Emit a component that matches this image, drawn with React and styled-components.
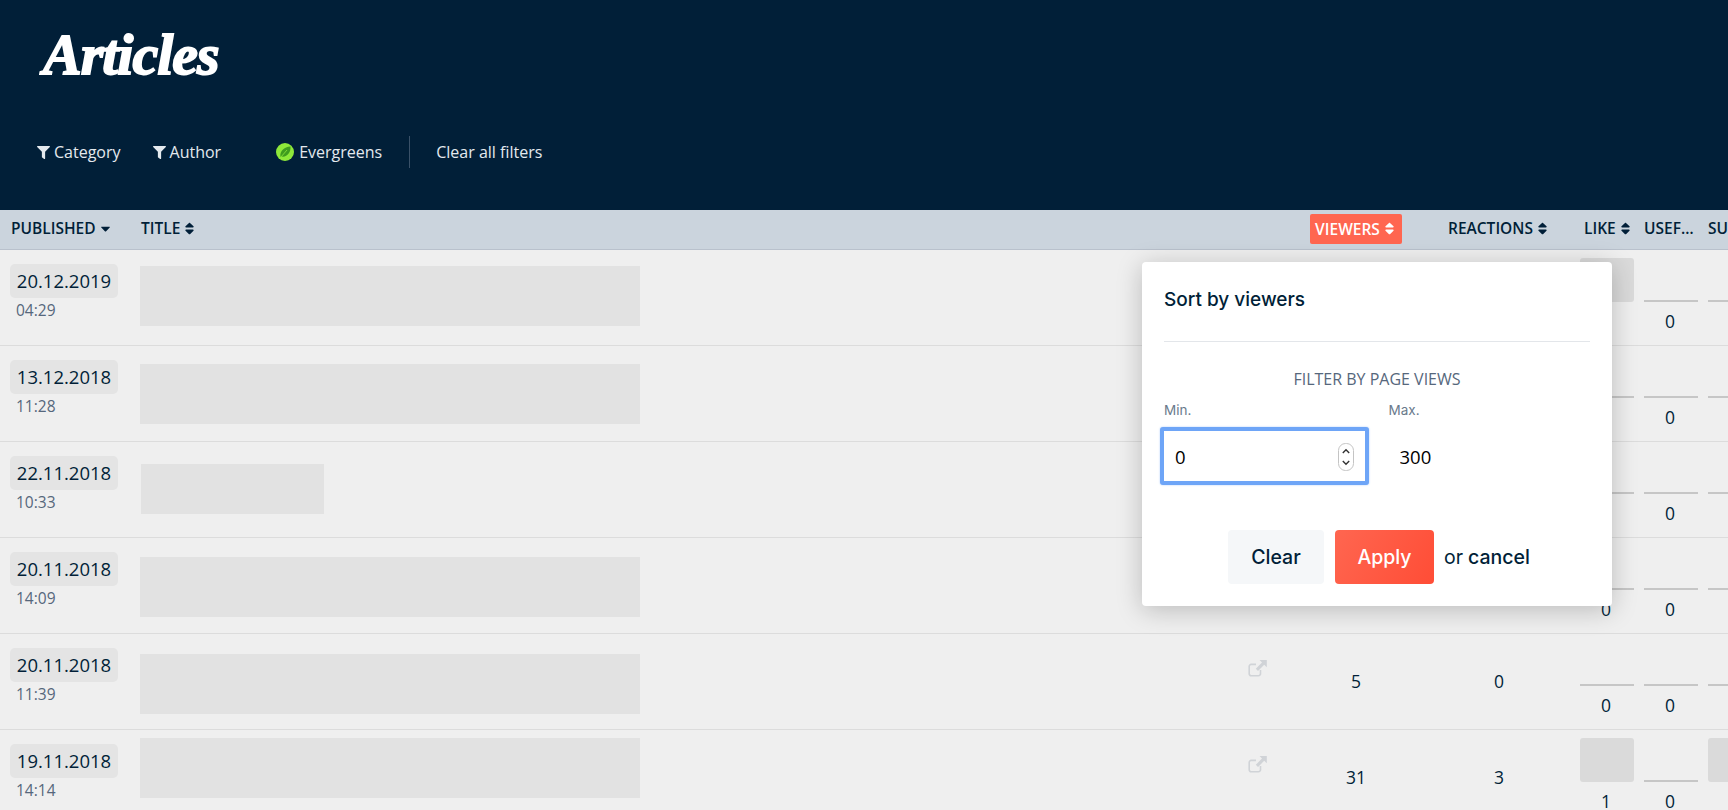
import React from 'react'
import styled, { createGlobalStyle, css } from 'styled-components'
import { FaFilter, FaSort, FaCaretDown } from 'react-icons/fa'

const GlobalStyle = createGlobalStyle`
  html, body {
    margin: 0;
    height: 100%;
    overflow: hidden;
    background: #efefef;
    font-family: 'Open Sans', sans-serif;
    color: #011f38;
  }
  * { box-sizing: border-box; }
`

const Header = styled.header`
  height: 210px;
  background: #011f38;
  padding: 24px 0 0 37px;
`

const Logo = styled.h1`
  margin: 0 0 0 6px;
  height: 62px;
  font-family: 'Liberation Serif', serif;
  font-size: 58px;
  line-height: 62px;
  font-weight: 700;
  font-style: italic;
  letter-spacing: -1px;
  color: #fff;
  -webkit-text-stroke: 1.8px #fff;
`

const FilterBar = styled.nav`
  display: flex;
  align-items: center;
  height: 32px;
  margin-top: 50px;
  font-size: 16px;
  color: #e4e9ee;
`

const FilterItem = styled.span`
  display: flex;
  align-items: center;
  gap: ${p => p.$gap || 4}px;
  margin-right: ${p => p.$right || 0}px;
  svg { color: #e4e9ee; }
`

const BarDivider = styled.span`
  width: 1px;
  height: 32px;
  background: #3a5168;
  margin: 0 26px 0 27px;
`

const Table = styled.main`
  position: relative;
`

const gridColumns = css`
  display: grid;
  grid-template-columns: 140px 1108px 62px 92px 178px 64px 64px 64px;
`

const HeadRow = styled.div`
  ${gridColumns}
  height: 40px;
  padding-bottom: 3px;
  align-items: center;
  background: #cbd4dd;
  border-bottom: 1px solid #b9c1cc;
  font-size: 15.5px;
  font-weight: 600;
  white-space: nowrap;
  overflow: hidden;
`

const HeadCell = styled.div`
  display: flex;
  align-items: center;
  gap: 2px;
  min-width: 0;
  padding-left: ${p => p.$pad || 0}px;
  svg { flex: none; }
`

const ActiveHead = styled.div`
  display: flex;
  align-items: center;
  justify-content: center;
  gap: 2px;
  height: 30px;
  margin-top: 1px;
  background: #ff6650;
  border-radius: 2px;
  color: #fff;
`

const Truncated = styled.span`
  display: block;
  width: 53px;
  overflow: hidden;
  text-overflow: ellipsis;
`

const Row = styled.div`
  ${gridColumns}
  height: 96px;
  background: #efefef;
  border-bottom: 1px solid #dcdcdc;
  overflow: hidden;
`

const DateCell = styled.div`
  padding: 14px 0 0 10px;
`

const DateBadge = styled.div`
  width: 108px;
  height: 34px;
  border-radius: 5px;
  background: #e4e4e4;
  font-size: 18.5px;
  line-height: 34px;
  text-align: center;
`

const Time = styled.div`
  margin: 2px 0 0 6px;
  font-size: 15.5px;
  line-height: 21px;
  color: #56677c;
`

const TitleCell = styled.div`
  padding-top: ${p => p.$top}px;
  padding-left: ${p => p.$left || 0}px;
`

const TitleBlock = styled.div`
  width: ${p => p.$w}px;
  height: ${p => p.$h}px;
  background: #e2e2e2;
`

const LinkCell = styled.div`
  padding-top: 26px;
  color: #d0d3d7;
`

const CountCell = styled.div`
  padding-top: 35px;
  padding-left: ${p => p.$pad || 0}px;
  text-align: center;
  font-size: 17.5px;
  line-height: 24px;
`

const ReactionCell = styled.div`
  padding-top: 8px;
`

const Bar = styled.div`
  width: 54px;
  height: 44px;
  display: flex;
  align-items: flex-end;
`

const BarFill = styled.div`
  width: 100%;
  border-radius: ${p => (p.$tall ? '3px' : '0')};
  height: ${p => (p.$tall ? 44 : 2)}px;
  background: ${p => (p.$tall ? '#dadada' : '#c6c6c6')};
`

const BarValue = styled.div`
  width: 52px;
  margin-top: 7px;
  text-align: center;
  font-size: 17.5px;
  line-height: 24px;
`

const Popover = styled.section`
  position: absolute;
  top: 52px;
  left: 1142px;
  width: 470px;
  height: 344px;
  padding: 0 22px;
  background: #fff;
  border-radius: 4px;
  box-shadow: 0 4px 26px rgba(0, 0, 0, 0.22);
`

const PopTitle = styled.h2`
  margin: 0;
  height: 80px;
  padding-top: 25px;
  border-bottom: 1px solid #e3e6ea;
  font-family: Inter, sans-serif;
  font-size: 19px;
  line-height: 26px;
  font-weight: 500;
`

const FilterLabel = styled.div`
  margin-top: 26px;
  text-align: center;
  font-size: 16px;
  line-height: 22px;
  color: #56677c;
`

const Inputs = styled.div`
  display: grid;
  grid-template-columns: 224.5px 202px;
  margin-top: 11px;
`

const FieldLabel = styled.label`
  display: block;
  font-family: Inter, sans-serif;
  font-size: 13.5px;
  line-height: 18px;
  color: #6a7a8c;
`

const FieldWrap = styled.div`
  position: relative;
  margin-top: ${p => (p.$focused ? 8 : 12)}px;
  margin-left: ${p => (p.$focused ? -4 : 0)}px;
  width: ${p => (p.$focused ? '209px' : '100%')};
`

const NumberField = styled.input`
  display: block;
  width: 100%;
  height: ${p => (p.$focused ? 58 : 50)}px;
  padding: 0 0 0 11px;
  border: ${p => (p.$focused ? '4px solid #6ea5f7' : '0')};
  border-radius: 3px;
  outline: none;
  background: #fff;
  box-shadow: ${p => (p.$focused ? '0 0 2px #a8c8fa' : 'none')};
  font-family: 'Open Sans', sans-serif;
  font-size: 18.5px;
  color: #000;
`

const Spinner = styled.svg`
  position: absolute;
  top: 16px;
  right: 15px;
`

const Actions = styled.div`
  display: flex;
  align-items: center;
  margin: 45px 0 0 64px;
  font-family: Inter, sans-serif;
  font-size: 19.5px;
  font-weight: 500;
`

const Button = styled.button`
  width: ${p => (p.$primary ? 99 : 96)}px;
  height: 54px;
  margin-right: ${p => (p.$primary ? 10 : 11)}px;
  border: 0;
  border-radius: 4px;
  background: ${p => (p.$primary ? 'linear-gradient(120deg, #ff6650, #ff4d36)' : '#f5f7f9')};
  color: ${p => (p.$primary ? '#fff' : '#011f38')};
  font: inherit;
`

const Or = styled.span`
  font-weight: 400;
  margin-right: 5px;
`

const LeafIcon = () => (
  <svg width="18" height="18" viewBox="0 0 18 18">
    <circle cx="9" cy="9" r="9" fill="#8ee83a" />
    <path d="M4.5 14 C3.5 8 8 4 14.5 3.5 C15 9.5 11 14.5 5.5 13.5 Z" fill="#3f9c1e" />
    <path d="M4.5 14.5 L11 7" stroke="#8ee83a" strokeWidth="0.8" fill="none" />
  </svg>
)

const ExternalIcon = () => (
  <svg width="19" height="17" viewBox="0 0 19 17" fill="none">
    <path d="M12.5 10 V13.5 A2 2 0 0 1 10.5 15.7 H3.3 A2 2 0 0 1 1.2 13.5 V6.5 A2 2 0 0 1 3.3 4.4 H8" stroke="currentColor" strokeWidth="1.6" />
    <path d="M11.5 0 H18.8 V7.3 L16.2 4.8 L10 11 L7.8 8.8 L14 2.6 Z" fill="currentColor" />
  </svg>
)

const SpinnerIcon = () => (
  <Spinner width="16" height="28" viewBox="0 0 16 28" fill="none">
    <rect x="0.5" y="0.5" width="15" height="27" rx="7" fill="#fff" stroke="#c4c4c4" />
    <path d="M4.8 10 L8 6.8 L11.2 10 M4.8 18 L8 21.2 L11.2 18" stroke="#333" strokeWidth="1.4" />
  </Spinner>
)

const rows = [
  { date: '20.12.2019', time: '04:29', top: 16, w: 500, h: 60, like: 1 },
  { date: '13.12.2018', time: '11:28', top: 18, w: 500, h: 60 },
  { date: '22.11.2018', time: '10:33', top: 22, left: 1, w: 183, h: 50 },
  { date: '20.11.2018', time: '14:09', top: 19, w: 500, h: 60 },
  { date: '20.11.2018', time: '11:39', top: 20, w: 500, h: 60, viewers: 5, reactions: 0 },
  { date: '19.11.2018', time: '14:14', top: 8, w: 500, h: 60, viewers: 31, reactions: 3, like: 1, surprised: 1 },
]

const App = () => (
  <>
    <GlobalStyle />
    <Header>
      <Logo>Articles</Logo>
      <FilterBar>
        <FilterItem $right={32}><FaFilter size={13} />Category</FilterItem>
        <FilterItem $right={55}><FaFilter size={13} />Author</FilterItem>
        <FilterItem $gap={5}><LeafIcon />Evergreens</FilterItem>
        <BarDivider />
        <FilterItem>Clear all filters</FilterItem>
      </FilterBar>
    </Header>
    <Table>
      <HeadRow>
        <HeadCell $pad={11}>PUBLISHED<FaCaretDown size={15} /></HeadCell>
        <HeadCell $pad={1}>TITLE<FaSort size={15} /></HeadCell>
        <div />
        <ActiveHead>VIEWERS<FaSort size={15} /></ActiveHead>
        <HeadCell $pad={46}>REACTIONS<FaSort size={15} /></HeadCell>
        <HeadCell $pad={4}>LIKE<FaSort size={15} /></HeadCell>
        <HeadCell><Truncated>USEFUL</Truncated></HeadCell>
        <HeadCell>SURPRISED</HeadCell>
      </HeadRow>
      {rows.map(r => (
        <Row key={r.date + r.time}>
          <DateCell>
            <DateBadge>{r.date}</DateBadge>
            <Time>{r.time}</Time>
          </DateCell>
          <TitleCell $top={r.top} $left={r.left}>
            <TitleBlock $w={r.w} $h={r.h} />
          </TitleCell>
          <LinkCell>{r.viewers !== undefined && <ExternalIcon />}</LinkCell>
          <CountCell>{r.viewers}</CountCell>
          <CountCell $pad={16}>{r.reactions}</CountCell>
          <ReactionCell>
            <Bar><BarFill $tall={r.like} /></Bar>
            <BarValue>{r.like || 0}</BarValue>
          </ReactionCell>
          <ReactionCell>
            <Bar><BarFill /></Bar>
            <BarValue>0</BarValue>
          </ReactionCell>
          <ReactionCell>
            <Bar><BarFill $tall={r.surprised} /></Bar>
          </ReactionCell>
        </Row>
      ))}
      <Popover>
        <PopTitle>Sort by viewers</PopTitle>
        <FilterLabel>FILTER BY PAGE VIEWS</FilterLabel>
        <Inputs>
          <div>
            <FieldLabel>Min.</FieldLabel>
            <FieldWrap $focused>
              <NumberField $focused readOnly value="0" />
              <SpinnerIcon />
            </FieldWrap>
          </div>
          <div>
            <FieldLabel>Max.</FieldLabel>
            <FieldWrap>
              <NumberField readOnly value="300" />
            </FieldWrap>
          </div>
        </Inputs>
        <Actions>
          <Button>Clear</Button>
          <Button $primary>Apply</Button>
          <Or>or</Or> cancel
        </Actions>
      </Popover>
    </Table>
  </>
)

export default App
